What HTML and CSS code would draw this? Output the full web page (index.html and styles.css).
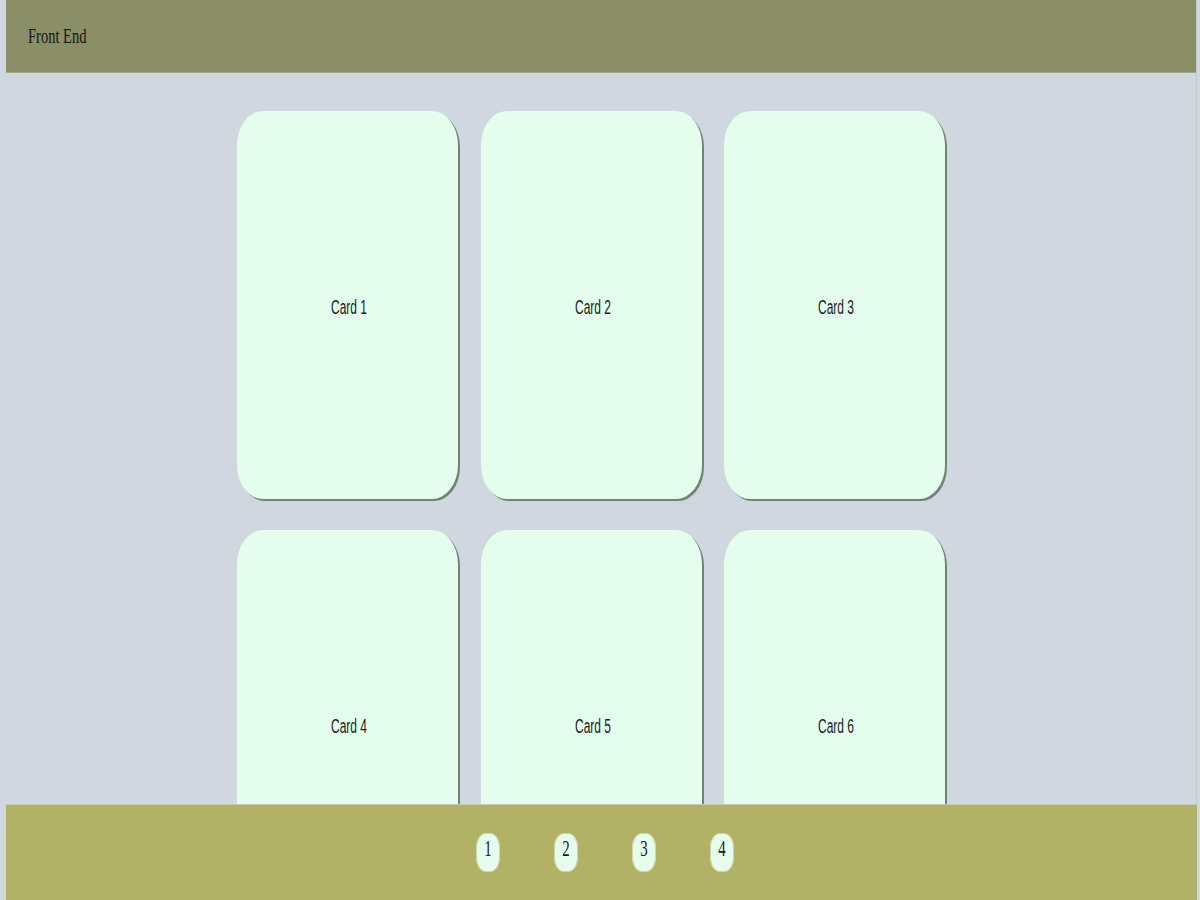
FILE: index.html
```html
<!DOCTYPE html>
<html lang="en">
<head>
<meta charset="utf-8">
<title>Front End</title>
<link rel="stylesheet" href="styles.css">
</head>
<body>
<div class="page">
  <header class="topbar">
    <span class="brand">Front End</span>
  </header>
  <main class="board">
    <div class="grid">
      <div class="card"><span class="card-label">Card 1</span></div>
      <div class="card"><span class="card-label">Card 2</span></div>
      <div class="card"><span class="card-label">Card 3</span></div>
      <div class="card"><span class="card-label">Card 4</span></div>
      <div class="card"><span class="card-label">Card 5</span></div>
      <div class="card"><span class="card-label">Card 6</span></div>
    </div>
  </main>
  <footer class="pager">
    <div class="pill"><span class="pill-num">1</span></div>
    <div class="pill"><span class="pill-num">2</span></div>
    <div class="pill"><span class="pill-num">3</span></div>
    <div class="pill"><span class="pill-num">4</span></div>
  </footer>
</div>
</body>
</html>
```

FILE: styles.css
```css
html, body {
  margin: 0;
  padding: 0;
  height: 100%;
  overflow: hidden;
}

body {
  background: #d1d7df;
  font-family: "Liberation Serif", serif;
  color: #1f1f1f;
}

.page {
  margin: 0 3px 0 6px;
  border-right: 1px solid #c4c9cf;
  min-height: 100%;
  position: relative;
}

.topbar {
  height: 72px;
  background: #8b8f67;
  border-bottom: 1px solid #a4a97f;
  display: flex;
  align-items: center;
  padding-left: 22px;
}

.brand {
  display: inline-block;
  font-size: 22px;
  line-height: 22px;
  transform: scaleX(0.66);
  transform-origin: left center;
  color: #141414;
}

.board {
  padding: 38px 0 0 231px;
}

.grid {
  display: grid;
  grid-template-columns: repeat(3, 221px);
  grid-auto-rows: 388px;
  column-gap: 22.5px;
  row-gap: 31px;
}

.card {
  background: #e4fdec;
  border-radius: 26px / 34px;
  box-shadow: 2px 2px 0.5px rgba(90, 110, 90, 0.8);
  display: flex;
  align-items: center;
  justify-content: center;
}

.card-label {
  display: inline-block;
  font-family: "Liberation Sans", Arial, sans-serif;
  font-size: 20px;
  line-height: 20px;
  transform: scaleX(0.6);
  color: #1c1c24;
  margin: 4px 0 0 4px;
}

.pager {
  position: fixed;
  left: 6px;
  right: 3px;
  bottom: 0;
  height: 96px;
  background: #b1b265;
  border-top: 1px solid #c3c6b4;
  display: flex;
  justify-content: center;
  align-items: flex-start;
  gap: 54px;
  padding: 28px 0 0 7.5px;
  box-sizing: border-box;
}

.pill {
  width: 24px;
  height: 39px;
  box-sizing: border-box;
  background: #e6fcec;
  border: 1px solid #d3d6a8;
  border-radius: 10px / 14px;
  display: flex;
  justify-content: center;
  align-items: flex-start;
  padding-top: 3px;
}

.pill-num {
  display: inline-block;
  font-family: "Liberation Serif", serif;
  font-size: 24px;
  line-height: 22px;
  transform: scaleX(0.62);
  color: #1a1a2a;
}
```
